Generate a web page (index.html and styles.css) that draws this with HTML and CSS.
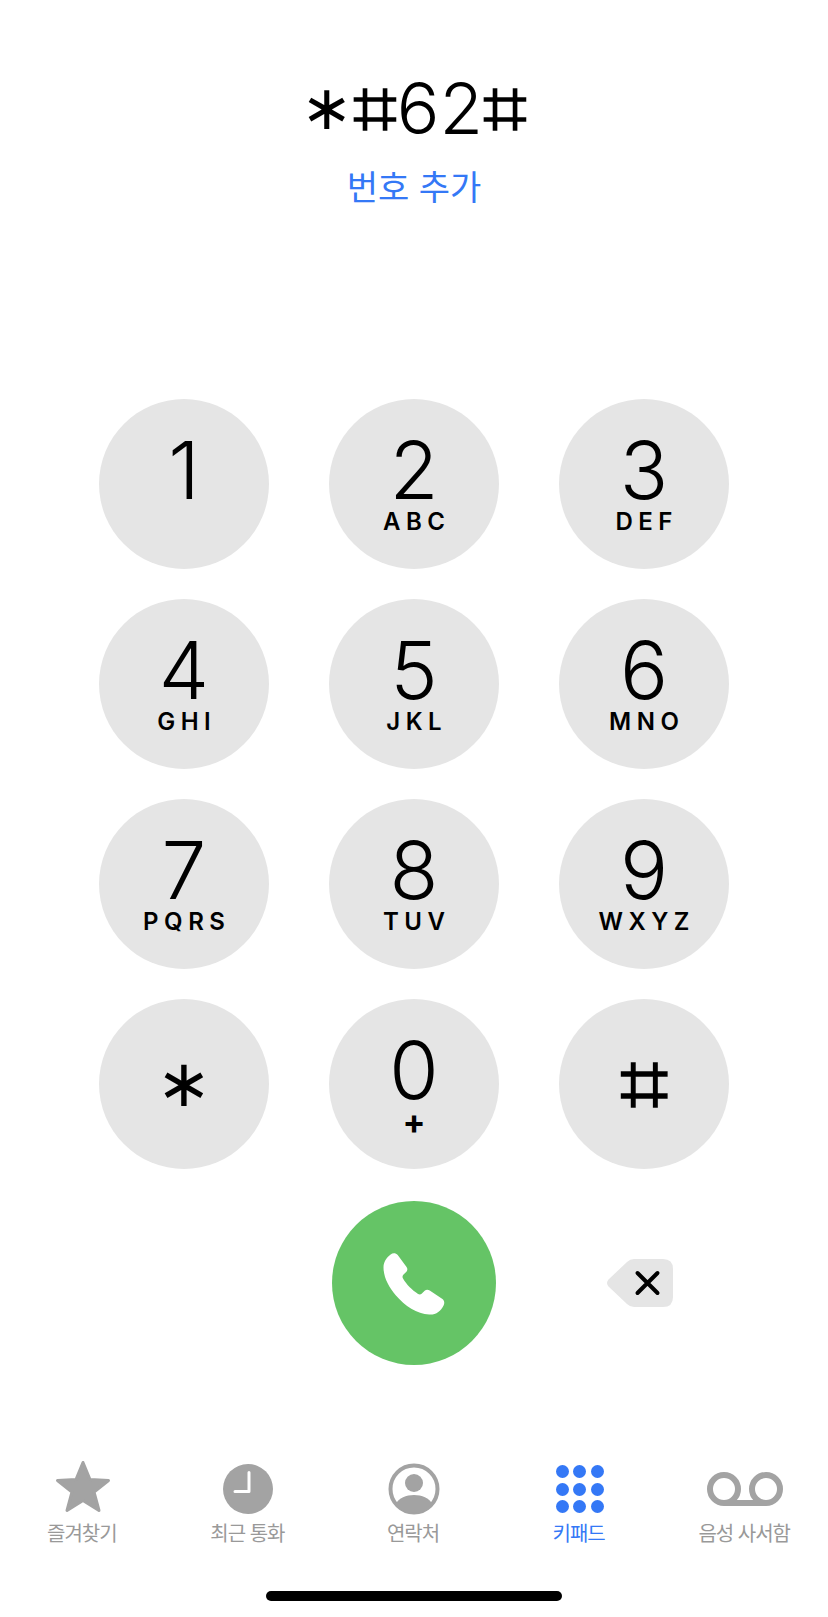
FILE: index.html
```html
<!DOCTYPE html>
<html lang="ko">
  <head>
    <meta charset="UTF-8" />
    <meta name="viewport" content="width=device-width, initial-scale=1.0" />
    <title>키패드</title>
    <link rel="stylesheet" href="styles.css">
  </head>
  <body>
    <div class="phone">
      <div class="dial-header">
        <p class="dial-number"><span class="sym-star">∗</span><span class="sym-hash">⌗</span>62<span class="sym-hash">⌗</span></p>
        <p class="add-number">번호 추가</p>
      </div>

      <div class="keypad">
        <div class="key"><span class="digit">1</span></div>
        <div class="key"><span class="digit">2</span><span class="letters">ABC</span></div>
        <div class="key"><span class="digit">3</span><span class="letters">DEF</span></div>
        <div class="key"><span class="digit">4</span><span class="letters">GHI</span></div>
        <div class="key"><span class="digit">5</span><span class="letters">JKL</span></div>
        <div class="key"><span class="digit">6</span><span class="letters">MNO</span></div>
        <div class="key"><span class="digit">7</span><span class="letters">PQRS</span></div>
        <div class="key"><span class="digit">8</span><span class="letters">TUV</span></div>
        <div class="key"><span class="digit">9</span><span class="letters">WXYZ</span></div>
        <div class="key key-symbol"><span class="key-star">∗</span></div>
        <div class="key"><span class="digit">0</span><span class="letters letters-plus">+</span></div>
        <div class="key key-symbol"><span class="key-hash">⌗</span></div>
      </div>

      <div class="call-row">
        <div class="call-button">
          <svg class="call-icon" width="63" height="63" viewBox="0 0 61 62">
            <path fill="#fff" d="M7 1.5C9-.3 12-.3 14 2l8.5 11.5c1.3 1.7 1.3 3.500 0 5l-3 3c-1 1-1 2.500-.3 3.700C22.500 31 28 36.500 34 40.300c1.200.7 2.500.7 3.500-.3l3-2.800c1.500-1.200 3.300-1.200 5-.2L58 45.300c2 1.500 2.300 4.200 1 6.500-2.500 5.200-7.500 9.200-14 8.700C33 60 21 52 12 41.500 5 33 0 24 0 14 0 9 3 4.500 7 1.500Z"/>
          </svg>
        </div>
        <svg class="backspace" width="66" height="48" viewBox="0 0 66 48">
          <path fill="#e5e5e5" d="M1.500 20.500 20 3q3-3 7-3h29q10 0 10 10v28q0 10-10 10H27q-4 0-7-3L1.500 27.500q-3-3.500 0-7Z"/>
          <path stroke="#000" stroke-width="4" stroke-linecap="round" d="m30.500 14 20 20m0-20-20 20"/>
        </svg>
      </div>

      <div class="tab-bar">
        <div class="tab">
          <div class="tab-icon">
            <svg class="star-icon" width="56" height="54" viewBox="0 0 56 54">
              <path fill="#a3a3a3" stroke="#a3a3a3" stroke-width="3" stroke-linejoin="round" d="M28 2.500 35 19.500 53.500 20.500 39 32 44 50.500 28 40.500 12 50.500 17 32 2.500 20.500 21 19.500Z"/>
            </svg>
          </div>
          <span class="tab-label">즐겨찾기</span>
        </div>
        <div class="tab">
          <div class="tab-icon">
            <svg width="50" height="50" viewBox="0 0 50 50">
              <circle cx="25" cy="25" r="25" fill="#a3a3a3"/>
              <path fill="none" stroke="#fff" stroke-width="3" stroke-linecap="round" stroke-linejoin="round" d="M26 8.500v19H12"/>
            </svg>
          </div>
          <span class="tab-label">최근 통화</span>
        </div>
        <div class="tab">
          <div class="tab-icon">
            <svg width="52" height="52" viewBox="0 0 52 52">
              <circle cx="26" cy="26" r="23.500" fill="none" stroke="#a3a3a3" stroke-width="4"/>
              <circle cx="26" cy="20" r="9" fill="#a3a3a3"/>
              <path fill="#a3a3a3" d="M7.500 41C11 35 18 32 26 32s15 3 18.500 9C40 47 33 50 26 50S12 47 7.500 41Z"/>
            </svg>
          </div>
          <span class="tab-label">연락처</span>
        </div>
        <div class="tab tab-active">
          <div class="tab-icon">
            <div class="dots">
              <i></i><i></i><i></i><i></i><i></i><i></i><i></i><i></i><i></i>
            </div>
          </div>
          <span class="tab-label">키패드</span>
        </div>
        <div class="tab">
          <div class="tab-icon">
            <svg width="76" height="34" viewBox="0 0 76 34">
              <circle cx="17" cy="17" r="14" fill="none" stroke="#a3a3a3" stroke-width="6"/>
              <circle cx="59" cy="17" r="14" fill="none" stroke="#a3a3a3" stroke-width="6"/>
              <path stroke="#a3a3a3" stroke-width="6" d="M17 31h42"/>
            </svg>
          </div>
          <span class="tab-label">음성 사서함</span>
        </div>
      </div>

      <div class="home-indicator"></div>
    </div>
  </body>
</html>
```

FILE: styles.css
```css
body {
  margin: 0;
  background-color: #fff;
  font-family: Inter, "Noto Sans CJK KR", sans-serif;
  color: #000;
}

p {
  margin: 0;
}

.phone {
  display: flex;
  flex-direction: column;
  height: 1617px;
}

.dial-header {
  height: 399px;
  padding-top: 64px;
  box-sizing: border-box;
  text-align: center;
}

.dial-number {
  display: flex;
  justify-content: center;
  align-items: center;
  height: 88px;
  font-size: 71px;
  font-weight: 300;
  line-height: 88px;
}

.sym-star {
  font-family: "DejaVu Sans", sans-serif;
  font-size: 62px;
  font-weight: 400;
}

.sym-hash {
  font-family: "DejaVu Sans", sans-serif;
  font-size: 78px;
  font-weight: 400;
  -webkit-text-stroke: 1.5px #000;
}

.add-number {
  margin-top: 11px;
  font-family: "Noto Sans CJK KR", sans-serif;
  font-size: 34px;
  line-height: 46px;
  color: #3478f6;
}

.keypad,
.call-row {
  display: grid;
  grid-template-columns: repeat(3, 170px);
  column-gap: 60px;
  justify-content: center;
}

.keypad {
  row-gap: 30px;
}

.key {
  display: flex;
  flex-direction: column;
  align-items: center;
  box-sizing: border-box;
  height: 170px;
  padding-top: 31px;
  border-radius: 50%;
  background-color: #e5e5e5;
}

.key-symbol {
  justify-content: center;
  padding-top: 0;
}

.digit {
  font-size: 80px;
  font-weight: 300;
  line-height: 80px;
}

.letters {
  font-size: 24px;
  font-weight: 600;
  line-height: 24px;
  letter-spacing: 5.500px;
  margin-right: -5.500px;
}

.letters-plus {
  font-size: 34px;
  font-weight: 700;
}

.key-star {
  font-family: "DejaVu Sans", sans-serif;
  font-size: 66px;
  line-height: 66px;
}

.key-hash {
  font-family: "DejaVu Sans", sans-serif;
  font-size: 86px;
  line-height: 86px;
  -webkit-text-stroke: 1.5px #000;
}

.call-row {
  margin-top: 32px;
  align-items: center;
}

.call-button {
  grid-column: 2;
  justify-self: center;
  display: flex;
  justify-content: center;
  align-items: center;
  width: 164px;
  height: 164px;
  border-radius: 50%;
  background-color: #65c466;
}

.call-icon {
  margin-top: 2px;
}

.backspace {
  grid-column: 3;
  margin-left: 48px;
}

.tab-bar {
  display: grid;
  grid-template-columns: repeat(5, 1fr);
  margin-top: 96px;
}

.tab {
  display: flex;
  flex-direction: column;
  align-items: center;
  color: #999;
}

.tab-active {
  color: #3478f6;
}

.tab-icon {
  display: flex;
  justify-content: center;
  align-items: center;
  height: 56px;
}

.star-icon {
  margin-bottom: 4px;
}

.tab-label {
  margin-top: 2px;
  margin-left: -2px;
  font-family: "Noto Sans CJK KR", sans-serif;
  font-size: 20px;
  line-height: 28px;
  letter-spacing: -1px;
}

.dots {
  display: grid;
  grid-template-columns: repeat(3, 13px);
  gap: 4.500px;
}

.dots i {
  width: 13px;
  height: 13px;
  border-radius: 50%;
  background-color: #3478f6;
}

.home-indicator {
  width: 296px;
  height: 10px;
  margin: auto auto 16px;
  border-radius: 5px;
  background-color: #000;
}
```
